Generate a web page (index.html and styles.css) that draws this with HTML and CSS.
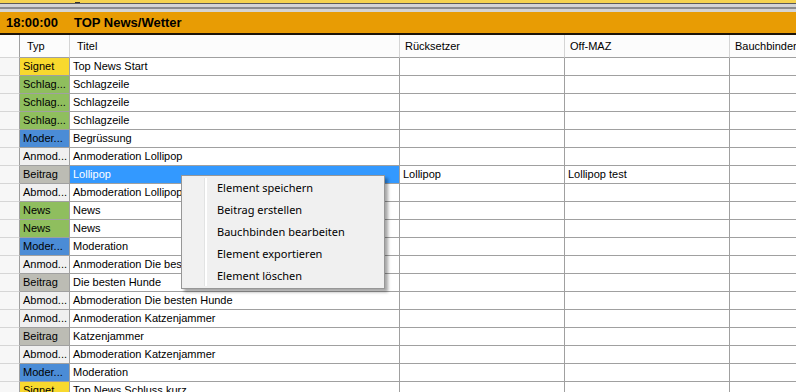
FILE: index.html
```html
<!DOCTYPE html>
<html lang="de">
<head>
<meta charset="utf-8">
<title>Rundown</title>
<link rel="stylesheet" href="styles.css">
</head>
<body>
<div class="app">
  <div class="topstrip"><span class="mark"></span></div>
  <div class="darkline"></div>
  <div class="grayband"><div class="grayline"></div></div>
  <div class="block">
    <span class="time">18:00:00</span>
    <span class="btitle">TOP News/Wetter</span>
  </div>
  <div class="blockline"></div>
  <div class="grid">
    <div class="row head">
      <div class="c rh"></div>
      <div class="c typ">Typ</div>
      <div class="c tit">Titel</div>
      <div class="c rs">Rücksetzer</div>
      <div class="c om">Off-MAZ</div>
      <div class="c bb">Bauchbinder</div>
    </div>
    <div class="row"><div class="c rh"></div><div class="c typ signet">Signet</div><div class="c tit">Top News Start</div><div class="c rs"></div><div class="c om"></div><div class="c bb"></div></div>
    <div class="row"><div class="c rh"></div><div class="c typ green">Schlag...</div><div class="c tit">Schlagzeile</div><div class="c rs"></div><div class="c om"></div><div class="c bb"></div></div>
    <div class="row"><div class="c rh"></div><div class="c typ green">Schlag...</div><div class="c tit">Schlagzeile</div><div class="c rs"></div><div class="c om"></div><div class="c bb"></div></div>
    <div class="row"><div class="c rh"></div><div class="c typ green">Schlag...</div><div class="c tit">Schlagzeile</div><div class="c rs"></div><div class="c om"></div><div class="c bb"></div></div>
    <div class="row"><div class="c rh"></div><div class="c typ blue">Moder...</div><div class="c tit">Begrüssung</div><div class="c rs"></div><div class="c om"></div><div class="c bb"></div></div>
    <div class="row"><div class="c rh"></div><div class="c typ light">Anmod...</div><div class="c tit">Anmoderation Lollipop</div><div class="c rs"></div><div class="c om"></div><div class="c bb"></div></div>
    <div class="row"><div class="c rh"></div><div class="c typ beitrag">Beitrag</div><div class="c tit sel">Lollipop</div><div class="c rs">Lollipop</div><div class="c om">Lollipop test</div><div class="c bb"></div></div>
    <div class="row"><div class="c rh"></div><div class="c typ light">Abmod...</div><div class="c tit">Abmoderation Lollipop</div><div class="c rs"></div><div class="c om"></div><div class="c bb"></div></div>
    <div class="row"><div class="c rh"></div><div class="c typ green">News</div><div class="c tit">News</div><div class="c rs"></div><div class="c om"></div><div class="c bb"></div></div>
    <div class="row"><div class="c rh"></div><div class="c typ green">News</div><div class="c tit">News</div><div class="c rs"></div><div class="c om"></div><div class="c bb"></div></div>
    <div class="row"><div class="c rh"></div><div class="c typ blue">Moder...</div><div class="c tit">Moderation</div><div class="c rs"></div><div class="c om"></div><div class="c bb"></div></div>
    <div class="row"><div class="c rh"></div><div class="c typ light">Anmod...</div><div class="c tit">Anmoderation Die besten Hunde</div><div class="c rs"></div><div class="c om"></div><div class="c bb"></div></div>
    <div class="row"><div class="c rh"></div><div class="c typ beitrag">Beitrag</div><div class="c tit">Die besten Hunde</div><div class="c rs"></div><div class="c om"></div><div class="c bb"></div></div>
    <div class="row"><div class="c rh"></div><div class="c typ light">Abmod...</div><div class="c tit">Abmoderation Die besten Hunde</div><div class="c rs"></div><div class="c om"></div><div class="c bb"></div></div>
    <div class="row"><div class="c rh"></div><div class="c typ light">Anmod...</div><div class="c tit">Anmoderation Katzenjammer</div><div class="c rs"></div><div class="c om"></div><div class="c bb"></div></div>
    <div class="row"><div class="c rh"></div><div class="c typ beitrag">Beitrag</div><div class="c tit">Katzenjammer</div><div class="c rs"></div><div class="c om"></div><div class="c bb"></div></div>
    <div class="row"><div class="c rh"></div><div class="c typ light">Abmod...</div><div class="c tit">Abmoderation Katzenjammer</div><div class="c rs"></div><div class="c om"></div><div class="c bb"></div></div>
    <div class="row"><div class="c rh"></div><div class="c typ blue">Moder...</div><div class="c tit">Moderation</div><div class="c rs"></div><div class="c om"></div><div class="c bb"></div></div>
    <div class="row"><div class="c rh"></div><div class="c typ signet">Signet</div><div class="c tit">Top News Schluss kurz</div><div class="c rs"></div><div class="c om"></div><div class="c bb"></div></div>

    <div class="menu">
      <div class="gutter"></div>
      <ul class="items">
        <li>Element speichern</li>
        <li>Beitrag erstellen</li>
        <li>Bauchbinden bearbeiten</li>
        <li>Element exportieren</li>
        <li>Element löschen</li>
      </ul>
    </div>
  </div>
</div>
</body>
</html>
```

FILE: styles.css
```css
* { box-sizing: border-box; }
html, body { margin: 0; padding: 0; }
body {
  width: 796px;
  height: 392px;
  overflow: hidden;
  background: #ffffff;
  font-family: "Liberation Sans", Arial, sans-serif;
  font-size: 11px;
  color: #000;
}
.app { width: 796px; height: 392px; overflow: hidden; }

.topstrip {
  height: 3px;
  background: #f6d34e;
  padding-left: 75px;
  display: flex;
  align-items: flex-end;
}
.mark { width: 5px; height: 1px; background: #333; }
.darkline { height: 1px; background: #5a5a5a; }
.grayband {
  height: 8px;
  background: #d4d4d4;
  padding-top: 3px;
}
.grayline { height: 2px; background: #8c8c8c; }

.block {
  height: 21px;
  background: #e89c04;
  display: flex;
  align-items: center;
  font-weight: bold;
  font-size: 13px;
}
.time { width: 69px; padding-left: 6px; }
.btitle { padding-left: 5px; }
.blockline { height: 2px; background: #1c1409; }

.grid { position: relative; }
.row {
  display: grid;
  grid-template-columns: 20px 50px 330px 165px 165px 1fr;
  height: 18px;
}
.row.head { height: 23px; background: #fcfcfc; }
.c {
  border-right: 1px solid #a0a0a0;
  border-bottom: 1px solid #a0a0a0;
  padding-left: 3px;
  white-space: nowrap;
  overflow: hidden;
  display: flex;
  align-items: center;
  line-height: 17px;
}
.head .c {
  border-right-color: #d5d5d5;
  border-bottom-color: #a0a0a0;
  padding-left: 5px;
  padding-top: 1px;
  font-size: 11px;
}
.head .typ { padding-left: 7px; }
.head .tit { padding-left: 7px; }
.c.rh { background: #f7f7f7; border-bottom-color: #d6d6d6; padding: 0; }
.head .c.rh { border-right-color: #a0a0a0; background: #fcfcfc; }
.c.bb { border-right: none; }

.signet { background: #f8d92e; }
.green { background: #8fbe5e; }
.blue { background: #4b8cd6; }
.light { background: #f0f0f0; }
.beitrag { background: #bcbcb4; }
.sel { background: #3399ff; color: #fff; }

.menu {
  position: absolute;
  left: 181px;
  top: 140px;
  width: 204px;
  height: 114px;
  background: #f0f0f0;
  border: 1px solid #979797;
  box-shadow: 3px 3px 3px rgba(0,0,0,0.35);
  display: flex;
  padding: 2px;
}
.gutter {
  width: 23px;
  background: linear-gradient(to right, #f1f1f1, #f1f1f1 20px, #e2e3e3 20px, #e2e3e3 21px, #ffffff 21px);
}
.items {
  list-style: none;
  margin: 0;
  padding: 0 0 0 10px;
  font-family: "Noto Sans", "Open Sans", sans-serif;
  font-size: 11px;
}
.items li {
  height: 22px;
  line-height: 20px;
}
```
